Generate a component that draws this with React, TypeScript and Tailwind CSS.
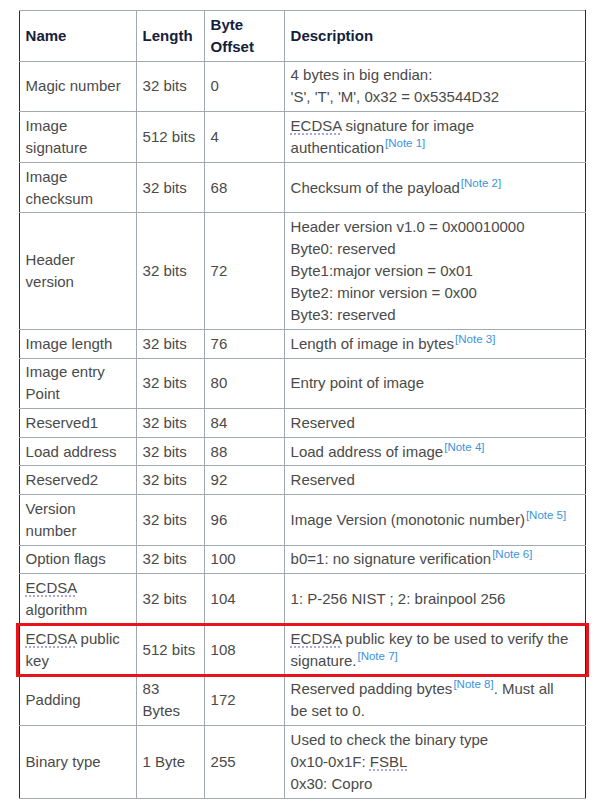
import React from 'react';

type Row = {
  name: React.ReactNode;
  length: React.ReactNode;
  offset: string;
  desc: React.ReactNode;
  marked?: boolean;
};

function Note({ n }: { n: number }) {
  return (
    <span className="relative -top-[6px] ml-px text-[11.5px] leading-none text-[#3a94dc]">[Note {n}]</span>
  );
}

function Abbr({ children }: { children: React.ReactNode }) {
  return (
    <span className="underline decoration-dotted decoration-[#8c8cd0] underline-offset-[3px]">{children}</span>
  );
}

const rows: Row[] = [
  {
    name: 'Magic number',
    length: '32 bits',
    offset: '0',
    desc: (
      <>
        4 bytes in big endian:
        <br />
        'S', 'T', 'M', 0x32 = 0x53544D32
      </>
    ),
  },
  {
    name: (
      <>
        Image
        <br />
        signature
      </>
    ),
    length: '512 bits',
    offset: '4',
    desc: (
      <>
        <Abbr>ECDSA</Abbr> signature for image
        <br />
        authentication
        <Note n={1} />
      </>
    ),
  },
  {
    name: (
      <>
        Image
        <br />
        checksum
      </>
    ),
    length: '32 bits',
    offset: '68',
    desc: (
      <>
        Checksum of the payload
        <Note n={2} />
      </>
    ),
  },
  {
    name: (
      <>
        Header
        <br />
        version
      </>
    ),
    length: '32 bits',
    offset: '72',
    desc: (
      <>
        Header version v1.0 = 0x00010000
        <br />
        Byte0: reserved
        <br />
        Byte1:major version = 0x01
        <br />
        Byte2: minor version = 0x00
        <br />
        Byte3: reserved
      </>
    ),
  },
  {
    name: 'Image length',
    length: '32 bits',
    offset: '76',
    desc: (
      <>
        Length of image in bytes
        <Note n={3} />
      </>
    ),
  },
  {
    name: (
      <>
        Image entry
        <br />
        Point
      </>
    ),
    length: '32 bits',
    offset: '80',
    desc: 'Entry point of image',
  },
  { name: 'Reserved1', length: '32 bits', offset: '84', desc: 'Reserved' },
  {
    name: 'Load address',
    length: '32 bits',
    offset: '88',
    desc: (
      <>
        Load address of image
        <Note n={4} />
      </>
    ),
  },
  { name: 'Reserved2', length: '32 bits', offset: '92', desc: 'Reserved' },
  {
    name: (
      <>
        Version
        <br />
        number
      </>
    ),
    length: '32 bits',
    offset: '96',
    desc: (
      <>
        Image Version (monotonic number)
        <Note n={5} />
      </>
    ),
  },
  {
    name: 'Option flags',
    length: '32 bits',
    offset: '100',
    desc: (
      <>
        b0=1: no signature verification
        <Note n={6} />
      </>
    ),
  },
  {
    name: (
      <>
        <Abbr>ECDSA</Abbr>
        <br />
        algorithm
      </>
    ),
    length: '32 bits',
    offset: '104',
    desc: '1: P-256 NIST ; 2: brainpool 256',
  },
  {
    name: (
      <>
        <Abbr>ECDSA</Abbr> public
        <br />
        key
      </>
    ),
    length: '512 bits',
    offset: '108',
    desc: (
      <>
        <Abbr>ECDSA</Abbr> public key to be used to verify the
        <br />
        signature.
        <Note n={7} />
      </>
    ),
    marked: true,
  },
  {
    name: 'Padding',
    length: (
      <>
        83
        <br />
        Bytes
      </>
    ),
    offset: '172',
    desc: (
      <>
        Reserved padding bytes
        <Note n={8} />. Must all
        <br />
        be set to 0.
      </>
    ),
  },
  {
    name: 'Binary type',
    length: '1 Byte',
    offset: '255',
    desc: (
      <>
        Used to check the binary type
        <br />
        0x10-0x1F: <Abbr>FSBL</Abbr>
        <br />
        0x30: Copro
      </>
    ),
  },
];

export default function App() {
  const cell = 'border border-[#a2a9b1] px-[5.6px] py-[2.8px] align-middle';

  return (
    <div className="min-h-screen bg-white pt-[10px] pl-[19px] font-['Liberation_Sans',Arial,sans-serif] text-[15px] leading-[22px] text-[#4a4a4a]">
      <table className="w-[566px] table-fixed border-collapse">
        <colgroup>
          <col className="w-[117px]" />
          <col className="w-[68px]" />
          <col className="w-[80px]" />
          <col className="w-[301px]" />
        </colgroup>
        <thead>
          <tr className="font-bold text-left text-[#15203a]">
            <th className={`${cell} border-l-[#1d2c4c]`}>Name</th>
            <th className={cell}>Length</th>
            <th className={cell}>
              Byte
              <br />
              Offset
            </th>
            <th className={`${cell} border-r-[#1d2c4c]`}>Description</th>
          </tr>
        </thead>
        <tbody>
          {rows.map((r, i) => (
            <tr key={i} className={r.marked ? 'relative' : ''}>
              <td className={`${cell} border-l-[#1d2c4c]`}>
                {r.marked && (
                  <div className="pointer-events-none absolute -left-[4px] -right-[3px] -top-[1px] -bottom-[2px] border-[3px] border-[#e8141c]" />
                )}
                {r.name}
              </td>
              <td className={cell}>{r.length}</td>
              <td className={cell}>{r.offset}</td>
              <td className={`${cell} border-r-[#1d2c4c]`}>{r.desc}</td>
            </tr>
          ))}
        </tbody>
      </table>
    </div>
  );
}
